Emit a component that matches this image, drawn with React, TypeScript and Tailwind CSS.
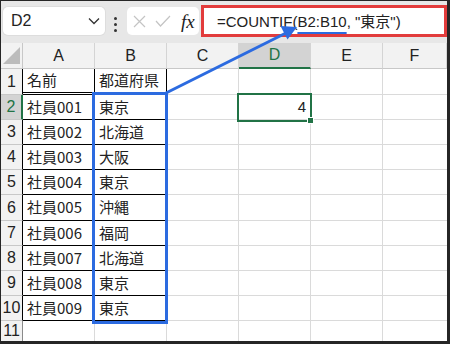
import React from 'react';

const FONT = { fontFamily: '"Liberation Sans", "Noto Sans CJK JP", sans-serif' };
const JP = { fontFamily: '"Noto Sans CJK JP", "Liberation Sans", sans-serif' };

const rows: Array<[string, string]> = [
  ['名前', '都道府県'],
  ['社員001', '東京'],
  ['社員002', '北海道'],
  ['社員003', '大阪'],
  ['社員004', '東京'],
  ['社員005', '沖縄'],
  ['社員006', '福岡'],
  ['社員007', '北海道'],
  ['社員008', '東京'],
  ['社員009', '東京'],
];

const rowHeights = ['h-[26px]', 'h-[25px]', 'h-[25px]', 'h-[25px]', 'h-[25px]', 'h-[26px]', 'h-[25px]', 'h-[25px]', 'h-[25px]', 'h-[25px]'];

function Toolbar() {
  return (
    <div className="flex h-[42px] items-start bg-[#e7e7e7]" style={FONT}>
      {/* Name box */}
      <div className="ml-[2px] mt-[6px] flex h-[28px] w-[102px] items-center justify-between rounded-[5px] bg-white pl-[8px] pr-[5px] shadow-[0_0_0_1px_rgba(0,0,0,0.04)]">
        <span className="text-[16px] text-[#222]">D2</span>
        <svg width="12" height="8" viewBox="0 0 12 8" fill="none">
          <path d="M1 1.5 L6 6.5 L11 1.5" stroke="#333" strokeWidth="1.3" />
        </svg>
      </div>
      {/* dots */}
      <div className="ml-[9px] mt-[16px] flex flex-col gap-[3px]">
        <span className="block h-[3px] w-[3px] rounded-full bg-[#333]" />
        <span className="block h-[3px] w-[3px] rounded-full bg-[#333]" />
        <span className="block h-[3px] w-[3px] rounded-full bg-[#333]" />
      </div>
      {/* function box */}
      <div className="ml-[10px] mt-[6px] flex h-[28px] w-[72px] items-center rounded-[5px] bg-white pl-[6px]">
        <svg width="13" height="13" viewBox="0 0 13 13" fill="none">
          <path d="M1 1 L12 12 M12 1 L1 12" stroke="#c4c4c4" strokeWidth="1.2" />
        </svg>
        <svg className="ml-[9px]" width="16" height="12" viewBox="0 0 16 12" fill="none">
          <path d="M1 6 L5.5 11 L15 1" stroke="#c4c4c4" strokeWidth="1.2" />
        </svg>
        <span className="ml-[10px] text-[19px] italic leading-none text-[#222]" style={{ fontFamily: '"Liberation Serif", serif' }}>
          fx
        </span>
      </div>
      {/* formula */}
      <div className="ml-[2px] mt-[4px] flex h-[32px] flex-1 items-center border-[3px] border-[#e23c3c] bg-white pl-[13px]">
        <span className="text-[15px] leading-none text-[#222]">
          =COUNTIF(
          <span className="underline decoration-[#2c6be0] decoration-2 underline-offset-[5px]">B2:B10</span>
          , "<span style={JP}>東京</span>")
        </span>
      </div>
    </div>
  );
}

function ColHeader({ label, w, selected }: { label: string; w: string; selected?: boolean }) {
  return (
    <div
      className={`flex ${w} items-center justify-center border-r border-[#d4d4d4] text-[16px] ${
        selected ? 'border-b-2 border-b-[#217346] bg-[#d3d3d3] text-[#217346]' : 'border-b border-b-[#c8c8c8] bg-[#f2f2f2] text-[#222]'
      }`}
    >
      {label}
    </div>
  );
}

export default function App() {
  return (
    <div className="h-[344px] w-[450px] overflow-hidden bg-[#262626] pb-[3px] pl-px pr-[3px] pt-px">
      <div className="relative h-full w-full overflow-hidden bg-white">
        <Toolbar />

        <div style={FONT}>
          {/* header row */}
          <div className="flex h-[26px]">
            <div className="relative w-[22px] border-b border-r border-[#c8c8c8] bg-[#f2f2f2]">
              <svg className="absolute left-[2px] top-[4px]" width="18" height="18" viewBox="0 0 18 18">
                <path d="M17 0 L17 17 L0 17 Z" fill="#bcbcbc" />
              </svg>
            </div>
            <ColHeader label="A" w="w-[72px]" />
            <ColHeader label="B" w="w-[72px]" />
            <ColHeader label="C" w="w-[72px]" />
            <ColHeader label="D" w="w-[72px]" selected />
            <ColHeader label="E" w="w-[72px]" />
            <ColHeader label="F" w="w-[64px]" />
          </div>

          {rows.map(([a, b], i) => {
            const first = i === 0;
            const sel = i === 1;
            return (
              <div key={i} className={`flex ${rowHeights[i]}`}>
                <div
                  className={`flex w-[22px] items-center justify-center border-b border-[#c8c8c8] text-[16px] ${
                    sel ? 'border-r-2 border-r-[#217346] bg-[#d3d3d3] text-[#217346]' : 'border-r border-r-black bg-[#f2f2f2] text-[#222]'
                  }`}
                >
                  {i + 1}
                </div>
                <div
                  className={`flex w-[72px] items-center border-r border-black pl-[4px] text-[15px] text-[#222] ${
                    first ? 'border-b-[3px] border-double' : 'border-b'
                  }`}
                  style={JP}
                >
                  {a}
                </div>
                <div
                  className={`flex w-[72px] items-center border-r border-black pl-[4px] text-[15px] text-[#222] ${
                    first ? 'border-b-[3px] border-double' : 'border-b'
                  }`}
                  style={JP}
                >
                  {b}
                </div>
                <div className="w-[72px] border-b border-r border-[#dadada]" />
                <div className="flex w-[72px] items-center justify-end border-b border-r border-[#dadada] pr-[4px] text-[15px] text-[#222]">
                  {sel ? '4' : ''}
                </div>
                <div className="w-[72px] border-b border-r border-[#dadada]" />
                <div className="w-[64px] border-b border-[#dadada]" />
              </div>
            );
          })}

          {/* row 11 */}
          <div className="flex h-[20px]">
            <div className="flex w-[22px] items-start justify-center border-r border-[#8a8a8a] bg-[#f2f2f2] pt-[2px] text-[16px] leading-none text-[#222]">
              11
            </div>
            <div className="w-[72px] border-r border-[#dadada]" />
            <div className="w-[72px] border-r border-[#dadada]" />
            <div className="w-[72px] border-r border-[#dadada]" />
            <div className="w-[72px] border-r border-[#dadada]" />
            <div className="w-[72px] border-r border-[#dadada]" />
            <div className="w-[64px]" />
          </div>
        </div>

        {/* blue range B2:B10 */}
        <div className="absolute left-[91px] top-[91px] h-[232px] w-[76px] border-[3px] border-[#2c6be0]" />

        {/* active cell D2 */}
        <div className="absolute left-[236px] top-[92px] h-[29px] w-[75px] border-2 border-[#217346]" />
        <div className="absolute left-[306px] top-[116px] h-[7px] w-[7px] border border-white bg-[#217346]" />

        {/* arrow */}
        <svg className="pointer-events-none absolute left-[-1px] top-[-1px]" width="450" height="344" viewBox="0 0 450 344">
          <line x1="166" y1="93" x2="286" y2="33" stroke="#2c6be0" strokeWidth="3" />
          <polygon points="297,27 287.5,39.5 280.5,26" fill="#2c6be0" />
        </svg>
      </div>
    </div>
  );
}
